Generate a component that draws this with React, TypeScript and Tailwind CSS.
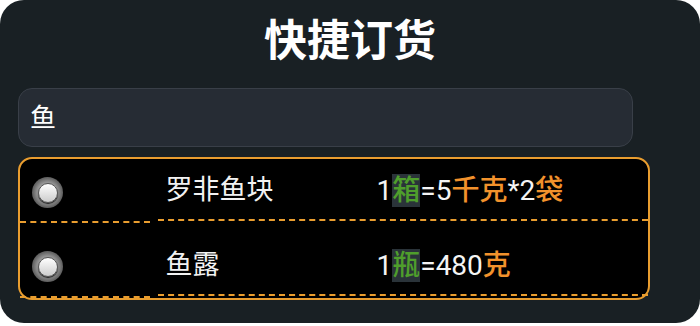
import React from 'react';

type Part = { text: string; kind: 'num' | 'unit' | 'base' };

const ITEMS: { name: string; spec: Part[] }[] = [
  {
    name: '罗非鱼块',
    spec: [
      { text: '1', kind: 'num' },
      { text: '箱', kind: 'base' },
      { text: '=5', kind: 'num' },
      { text: '千克', kind: 'unit' },
      { text: '*2', kind: 'num' },
      { text: '袋', kind: 'unit' },
    ],
  },
  {
    name: '鱼露',
    spec: [
      { text: '1', kind: 'num' },
      { text: '瓶', kind: 'base' },
      { text: '=480', kind: 'num' },
      { text: '克', kind: 'unit' },
    ],
  },
];

const FONT = "font-['Roboto','Noto_Sans_CJK_SC',sans-serif]";

function Radio() {
  return (
    <div className="w-[31px] h-[31px] rounded-full flex items-center justify-center bg-[radial-gradient(circle,#a8a8a8_38%,#666_66%,#2a2a2a_100%)]">
      <div className="w-[20px] h-[20px] rounded-full border border-[#555] bg-[linear-gradient(#ffffff,#cccccc)] shadow-[0_1px_1px_#1a1a1a]" />
    </div>
  );
}

function Spec({ parts }: { parts: Part[] }) {
  return (
    <span className="text-[28px] leading-[39px] text-[#f4f4f4]">
      {parts.map((p, i) =>
        p.kind === 'base' ? (
          <span key={i} className="bg-[#2a3339] text-[#4f9e2c] font-medium">
            {p.text}
          </span>
        ) : p.kind === 'unit' ? (
          <span key={i} className="text-[#f2922c] font-medium">
            {p.text}
          </span>
        ) : (
          <span key={i}>{p.text}</span>
        )
      )}
    </span>
  );
}

export default function App() {
  return (
    <div className={`w-[700px] h-[326px] bg-white ${FONT}`}>
      <div className="h-[323px] rounded-[24px] bg-[#192024] px-[18px] pt-[14px]">
        {/* Title */}
        <h1 className="text-center text-white font-semibold text-[43px] leading-[54px]">快捷订货</h1>

        {/* Search */}
        <div className="mt-[20px] w-[615px] h-[59px] rounded-[14px] bg-[#262c34] border-[1.5px] border-[#393f48] flex items-center pl-[11px]">
          <span className="text-[26px] text-white leading-none">鱼</span>
        </div>

        {/* Results */}
        <div className="mt-[10px] w-[632px] h-[143px] rounded-[14px] border-2 border-[#e99d2f] bg-black flex">
          <div className="w-[130px] flex flex-col">
            <div className="h-[65px] border-b-2 border-dashed border-[#e99d2f] pl-[12px] pt-[18px]">
              <Radio />
            </div>
            <div className="h-[75.5px] border-b-2 border-dashed border-[#e99d2f] pl-[12px] pt-[28px]">
              <Radio />
            </div>
          </div>
          <div className="flex-1 ml-[7.5px] flex flex-col">
            {ITEMS.map((item, i) => (
              <div
                key={item.name}
                className={`${i === 0 ? 'h-[62px] pt-[12px]' : 'h-[75px] pt-[25px]'} border-b-2 border-dashed border-[#e99d2f] flex items-start`}
              >
                <span className="w-[219px] pl-[8px] text-[27px] leading-[39px] text-[#f2f2f2]">{item.name}</span>
                <Spec parts={item.spec} />
              </div>
            ))}
          </div>
        </div>
      </div>
    </div>
  );
}
